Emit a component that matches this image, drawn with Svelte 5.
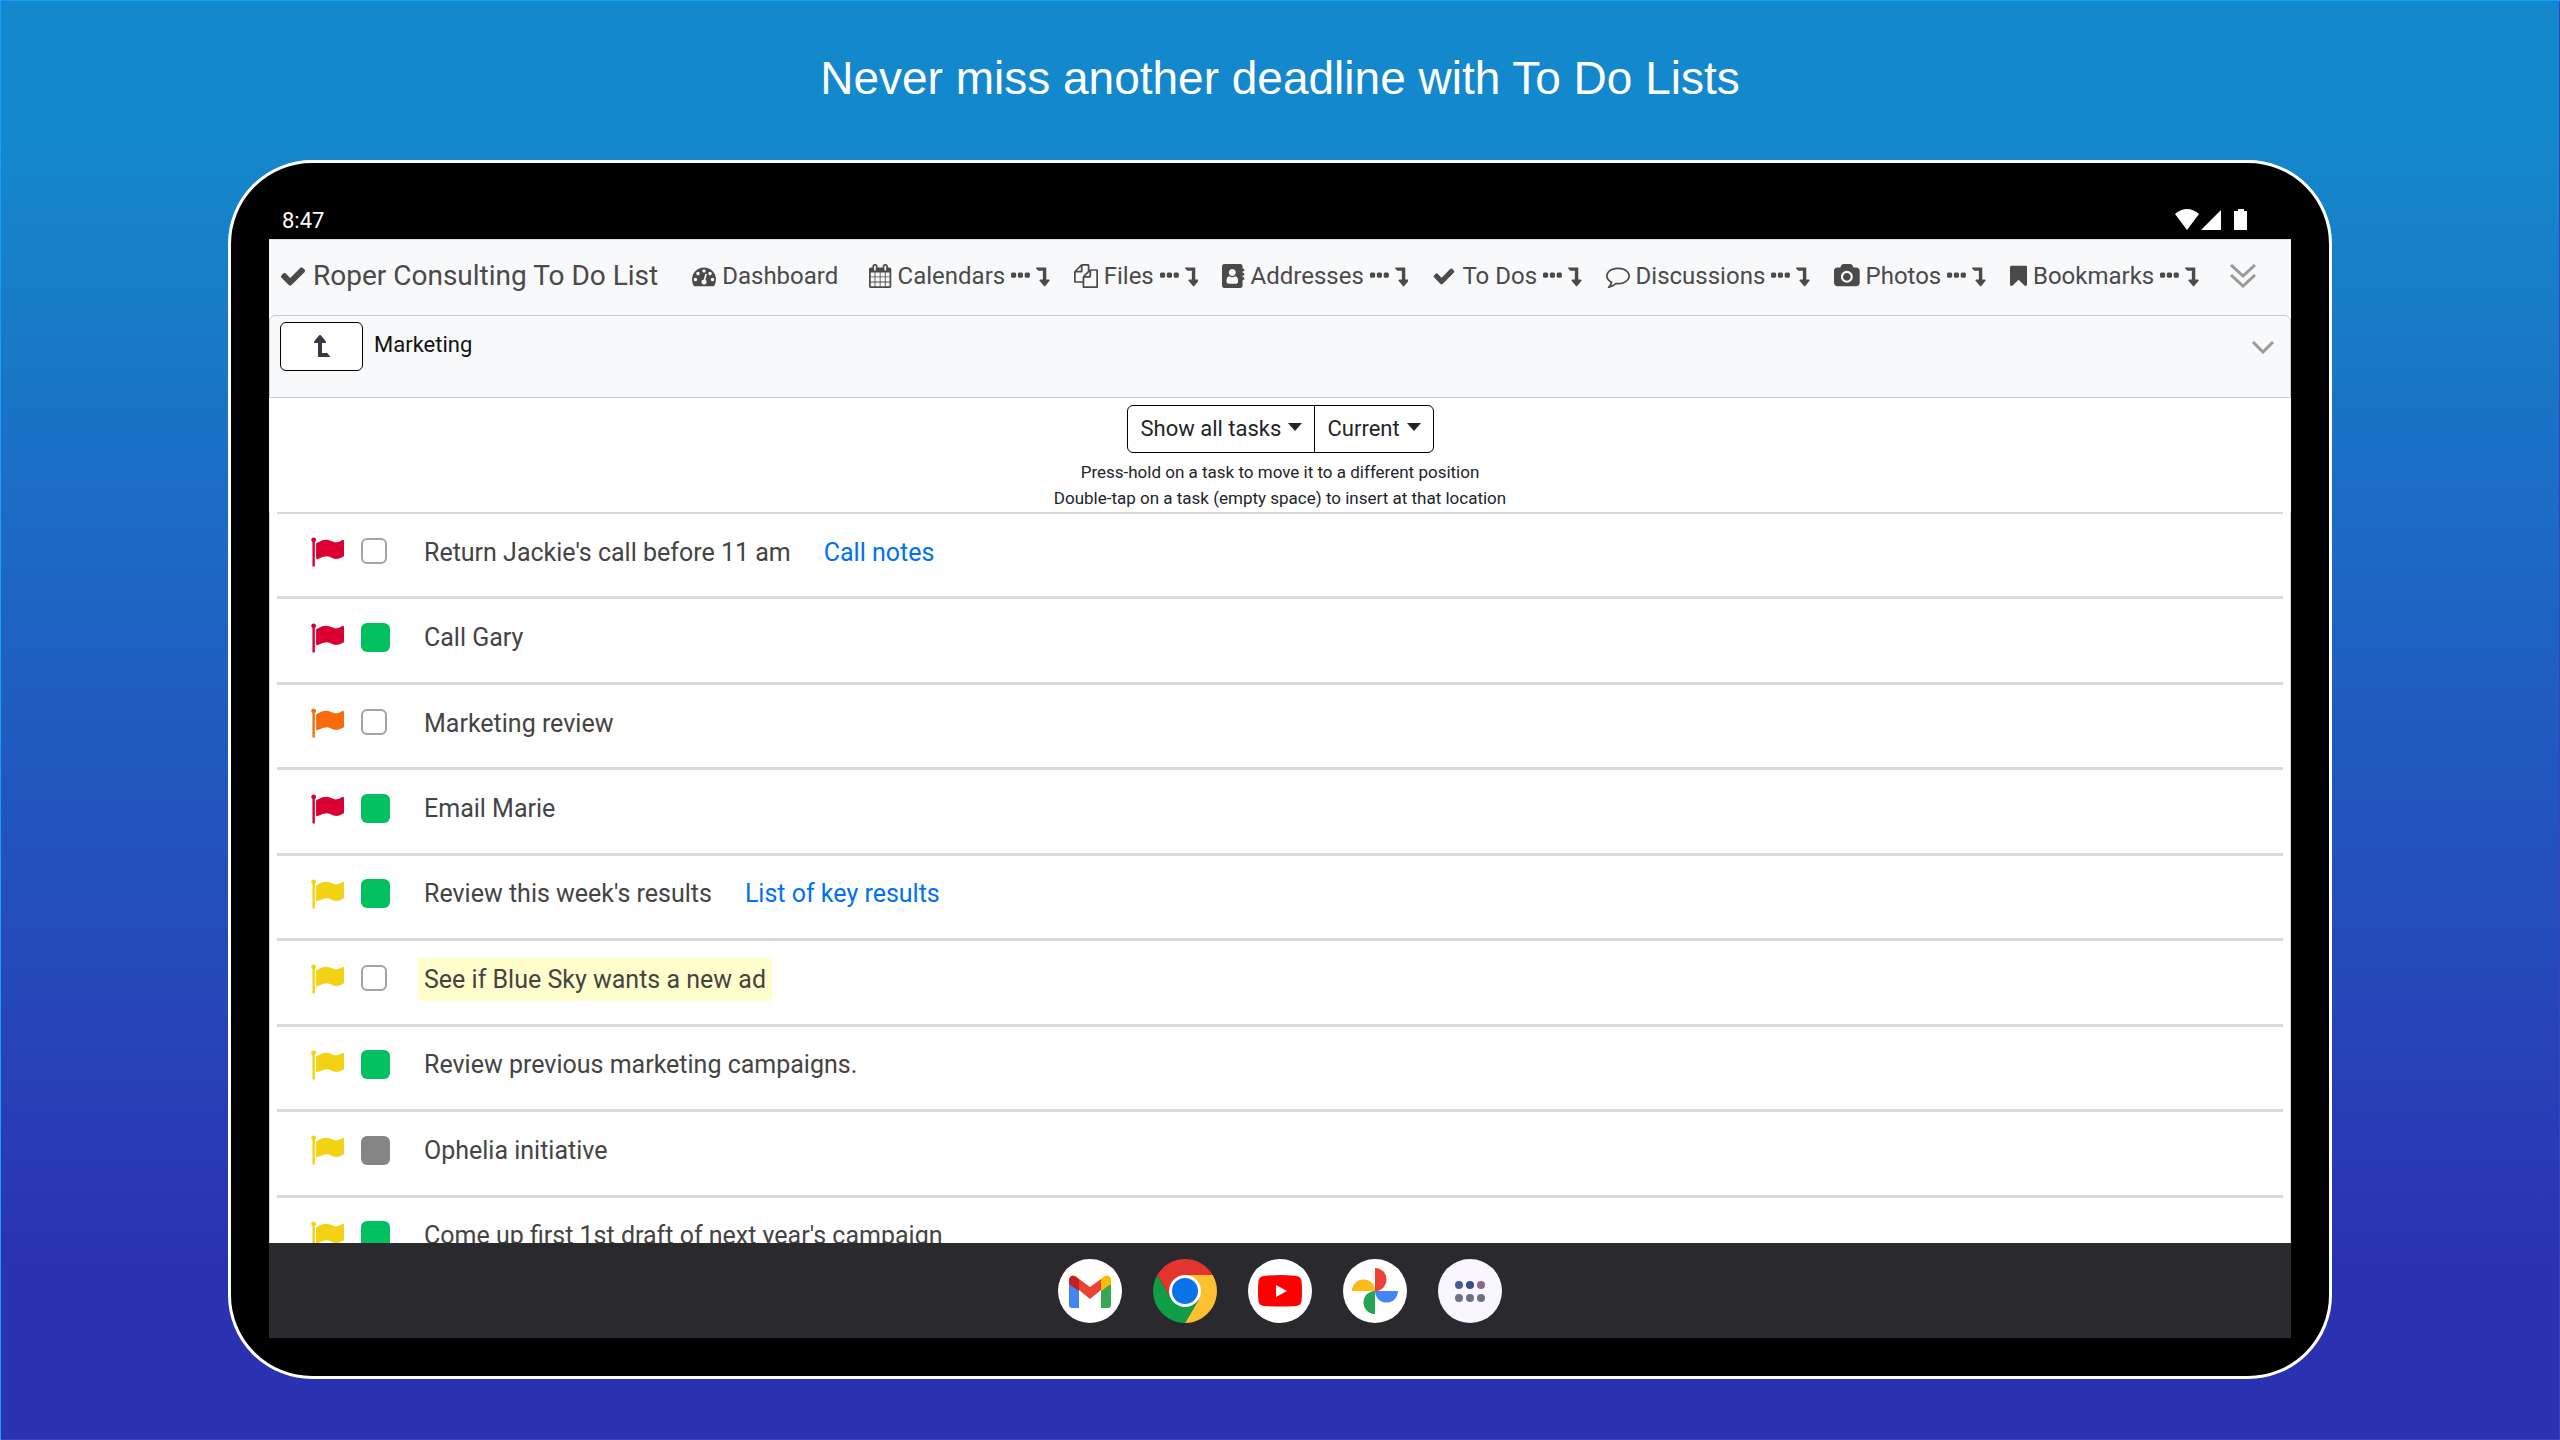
<!--
  App.svelte: promo panel with a tablet showing the shared to-do list.

  The screen is split into status bar, app page (nav, folder bar, filters,
  task rows) and the system dock. The task list is clipped by the dock.
-->
<script lang="ts">
  type Task = {
    text: string;
    flag: 'red' | 'orange' | 'yellow';
    state: 'open' | 'done' | 'parked';
    link?: string;
    highlight?: boolean;
  };

  // ICONS: glyph outlines on a 1792-unit em; w is the advance width.
  const ICONS: Record<string, { w: number; d: string }> = {
    check: { w: 1792, d: 'M1671 566q0 40-28 68l-724 724-136 136q-28 28-68 28t-68-28l-136-136-362-362q-28-28-28-68t28-68l136-136q28-28 68-28t68 28l294 295 656-657q28-28 68-28t68 28l136 136q28 28 28 68z' },
    gauge: { w: 1792, d: 'M384 1152q0-53-37.5-90.5t-90.5-37.5-90.5 37.5-37.5 90.5 37.5 90.5 90.5 37.5 90.5-37.5 37.5-90.5zm192-448q0-53-37.5-90.5t-90.5-37.5-90.5 37.5-37.5 90.5 37.5 90.5 90.5 37.5 90.5-37.5 37.5-90.5zm428 481l101-382q6-26-7.5-48.5t-38.5-29.5-48 6.5-30 39.5l-101 382q-60 5-107 43.5t-63 98.5q-20 77 20 146t117 89 146-20 89-117q16-60-6-117t-72-91zm660-33q0-53-37.5-90.5t-90.5-37.5-90.5 37.5-37.5 90.5 37.5 90.5 90.5 37.5 90.5-37.5 37.5-90.5zm-640-640q0-53-37.5-90.5t-90.5-37.5-90.5 37.5-37.5 90.5 37.5 90.5 90.5 37.5 90.5-37.5 37.5-90.5zm448 192q0-53-37.5-90.5t-90.5-37.5-90.5 37.5-37.5 90.5 37.5 90.5 90.5 37.5 90.5-37.5 37.5-90.5zm320 448q0 261-141 483-19 29-54 29h-1402q-35 0-54-29-141-221-141-483 0-182 71-348t191-286 286-191 348-71 348 71 286 191 191 286 71 348z' },
    calendar: { w: 1664, d: 'M128 1664h288v-288h-288v288zm352 0h320v-288h-320v288zm-352-352h288v-320h-288v320zm352 0h320v-320h-320v320zm-352-384h288v-288h-288v288zm736 736h320v-288h-320v288zm-384-736h320v-288h-320v288zm768 736h288v-288h-288v288zm-384-352h320v-320h-320v320zm-352-864v-288q0-13-9.500-22.500t-22.500-9.500h-64q-13 0-22.500 9.500t-9.500 22.500v288q0 13 9.500 22.500t22.500 9.500h64q13 0 22.500-9.500t9.500-22.500zm736 864h288v-320h-288v320zm-384-384h320v-288h-320v288zm384 0h288v-288h-288v288zm32-480v-288q0-13-9.500-22.500t-22.500-9.500h-64q-13 0-22.500 9.500t-9.500 22.500v288q0 13 9.500 22.500t22.500 9.500h64q13 0 22.500-9.500t9.500-22.500zm384-64v1280q0 52-38 90t-90 38h-1408q-52 0-90-38t-38-90v-1280q0-52 38-90t90-38h128v-96q0-66 47-113t113-47h64q66 0 113 47t47 113v96h384v-96q0-66 47-113t113-47h64q66 0 113 47t47 113v96h128q52 0 90 38t38 90z' },
    files: { w: 1792, d: 'M1696 384q40 0 68 28t28 68v1216q0 40-28 68t-68 28h-960q-40 0-68-28t-28-68v-288h-544q-40 0-68-28t-28-68v-672q0-40 20-88t48-76l408-408q28-28 76-48t88-20h416q40 0 68 28t28 68v328q68-40 128-40h416zm-544 213l-299 299h299v-299zm-640-384l-299 299h299v-299zm196 647l316-316v-416h-384v416q0 40-28 68t-68 28h-416v640h512v-256q0-40 20-88t48-76zm956 804v-1152h-384v416q0 40-28 68t-68 28h-416v640h896z' },
    address: { w: 1664, d: 'M160 0h1216q66 0 113 47t47 113v192h96q32 0 32 32v128q0 32-32 32h-96v128h96q32 0 32 32v128q0 32-32 32h-96v128h96q32 0 32 32v128q0 32-32 32h-96v448q0 66-47 113t-113 47h-1216q-66 0-113-47t-47-113v-1472q0-66 47-113t113-47zM1201 1298q0-57-5.500-107t-21-100.500-39.500-86-64-58-91-22.500q-100 72-212 72t-212-72q-51 0-91 22.500t-64 58-39.500 86-21 100.500-5.500 107q0 73 42 121.500t103 48.500h576q61 0 103-48.500t42-121.500zM1028 640q0-108-76-184t-184-76-184 76-76 184 76 184 184 76 184-76 76-184z' },
    comment: { w: 1792, d: 'M896 384q-204 0-381.500 69.500t-282 187.500-104.500 255q0 112 71.500 213.500t201.500 175.500l87 50-27 96q-24 91-70 172 152-63 275-171l43-38 57 6q69 8 130 8 204 0 381.500-69.500t282-187.500 104.500-255-104.500-255-282-187.500-381.500-69.500zm896 512q0 174-120 321.500t-326 233-450 85.500q-70 0-145-8-198 175-460 242-49 14-114 22h-5q-15 0-27-10.500t-16-27.500v-1q-3-4-.5-12t2-10 4.500-9.500l6-9 7-8.500 8-9q7-8 31-34.500t34.500-38 31-39.500 32.500-51 27-59 26-76q-157-89-247.500-220t-90.500-281q0-174 120-321.500t326-233 450-85.500 450 85.500 326 233 120 321.500z' },
    camera: { w: 1920, d: 'M960 672q119 0 203.500 84.500t84.500 203.500-84.500 203.500-203.500 84.500-203.500-84.500-84.500-203.500 84.500-203.500 203.500-84.500zm704-416q106 0 181 75t75 181v896q0 106-75 181t-181 75h-1408q-106 0-181-75t-75-181v-896q0-106 75-181t181-75h224l51-136q19-49 69.500-84.500t103.500-35.500h512q53 0 103.500 35.500t69.500 84.500l51 136h224zm-704 1152q185 0 316.500-131.500t131.500-316.500-131.500-316.500-316.500-131.500-316.500 131.500-131.500 316.500 131.500 316.500 316.500 131.500z' },
    bookmark: { w: 1280, d: 'M1164 128q23 0 44 9 33 13 52.500 41t19.500 62v1289q0 34-19.500 62t-52.500 41q-19 8-44 8-48 0-83-32l-441-424-441 424q-36 33-83 33-23 0-44-9-33-13-52.500-41t-19.500-62v-1289q0-34 19.500-62t52.500-41q21-9 44-9h1048z' },
    ellipsis: { w: 1408, d: 'M384 736v192q0 40-28 68t-68 28h-192q-40 0-68-28t-28-68v-192q0-40 28-68t68-28h192q40 0 68 28t28 68zm512 0v192q0 40-28 68t-68 28h-192q-40 0-68-28t-28-68v-192q0-40 28-68t68-28h192q40 0 68 28t28 68zm512 0v192q0 40-28 68t-68 28h-192q-40 0-68-28t-28-68v-192q0-40 28-68t68-28h192q40 0 68 28t28 68z' },
    down: { w: 1024, d: 'M32 256h704q13 0 22.500 9.500t9.500 23.500v863h192q40 0 58 37 17 37-9 68l-320 384q-18 22-49 22t-49-22l-320-384q-27-32-9-68 18-37 58-37h192v-640h-320q-14 0-25-11l-160-192q-13-14-4-34 9-19 29-19z' },
    flag: { w: 1792, d: 'M320 256q0 72-64 110v1266q0 13-9.500 22.500t-22.500 9.500h-64q-13 0-22.500-9.500t-9.500-22.500v-1266q-64-38-64-110 0-53 37.500-90.500t90.500-37.500 90.500 37.500 37.500 90.500zm1472 64v763q0 25-12.500 38.500t-39.500 27.500q-215 116-369 116-61 0-123.500-22t-108.500-48-115.500-48-142.500-22q-192 0-464 146-17 9-33 9-26 0-45-19t-19-45v-742q0-32 31-55 21-14 79-43 236-120 421-120 107 0 200 29t219 88q38 19 88 19 54 0 117.500-21t110-47 88-47 54.500-21q26 0 45 19t19 45z' },
  };

  const sections = [
    { icon: 'calendar', label: 'Calendars' },
    { icon: 'files', label: 'Files' },
    { icon: 'address', label: 'Addresses' },
    { icon: 'check', label: 'To Dos' },
    { icon: 'comment', label: 'Discussions' },
    { icon: 'camera', label: 'Photos' },
    { icon: 'bookmark', label: 'Bookmarks' },
  ];

  const tasks: Task[] = [
    { text: "Return Jackie's call before 11 am", flag: 'red', state: 'open', link: 'Call notes' },
    { text: 'Call Gary', flag: 'red', state: 'done' },
    { text: 'Marketing review', flag: 'orange', state: 'open' },
    { text: 'Email Marie', flag: 'red', state: 'done' },
    { text: "Review this week's results", flag: 'yellow', state: 'done', link: 'List of key results' },
    { text: 'See if Blue Sky wants a new ad', flag: 'yellow', state: 'open', highlight: true },
    { text: 'Review previous marketing campaigns.', flag: 'yellow', state: 'done' },
    { text: 'Ophelia initiative', flag: 'yellow', state: 'parked' },
    { text: "Come up first 1st draft of next year's campaign", flag: 'yellow', state: 'done' },
  ];
</script>

{#snippet icon(name: string)}
  <svg class="icon" viewBox="0 0 {ICONS[name].w} 1792" aria-hidden="true"><path fill-rule="evenodd" d={ICONS[name].d} /></svg>
{/snippet}

{#snippet filter(label: string)}
  <label class="filter">
    <select aria-label={label}><option>{label}</option></select>
    <svg viewBox="0 0 14 8" aria-hidden="true"><path d="M0 0h14l-7 8z" /></svg>
  </label>
{/snippet}

<main class="stage">
  <h1>Never miss another deadline with To Do Lists</h1>

  <div class="tablet">
    <div class="status">
      <span>8:47</span>
      <svg viewBox="0 0 72 22" aria-hidden="true">
        <path d="M0 5Q12-5 24 5L12 21zM46 1v20H26zM60 2h3V0h6v2h3v19H59V2z" />
      </svg>
    </div>

    <div class="page">
      <nav>
        <a class="brand" href="#list">{@render icon('check')}Roper Consulting To Do List</a>
        <a class="item home" href="#dashboard">{@render icon('gauge')}Dashboard</a>
        {#each sections as s}
          <a class="item" href="#{s.icon}">
            {@render icon(s.icon)}{s.label}{@render icon('ellipsis')}{@render icon('down')}
          </a>
        {/each}
        <button class="plain more" aria-label="More">
          <svg viewBox="0 0 26 24" aria-hidden="true"><path d="M1 1l12 11L25 1M1 11l12 11 12-11" /></svg>
        </button>
      </nav>

      <div class="folder">
        <button class="up" aria-label="Up one level">{@render icon('down')}</button>
        <span>Marketing</span>
        <button class="plain expand" aria-label="Expand">
          <svg viewBox="0 0 22 13" aria-hidden="true"><path d="M1 1l10 10L21 1" /></svg>
        </button>
      </div>

      <div class="filters">
        <div class="group">
          {@render filter('Show all tasks')}
          {@render filter('Current')}
        </div>
        <p>Press-hold on a task to move it to a different position</p>
        <p>Double-tap on a task (empty space) to insert at that location</p>
      </div>

      <div class="clip">
        <ul>
          {#each tasks as t, i}
            <li>
              <span class="flag {t.flag}">{@render icon('flag')}</span>
              <span class="tick"><input id="task-{i}" type="checkbox" class={t.state} checked={t.state !== 'open'} /></span>
              <label for="task-{i}" class:highlight={t.highlight}>{t.text}</label>
              {#if t.link}<a href="#task-{i}">{t.link}</a>{/if}
            </li>
          {/each}
        </ul>
      </div>
    </div>

    <div class="dock">
      <button class="plain" aria-label="Gmail">
        <svg viewBox="0 0 64 64">
          <circle cx="32" cy="32" r="32" fill="#fff" />
          <path fill="#4285f4" d="M11 23l10 8v18h-7q-3 0-3-3z" />
          <path fill="#34a853" d="M53 23l-10 8v18h7q3 0 3-3z" />
          <path fill="#ea4335" d="M21 20l11 8 11-8v11l-11 9-11-9z" />
          <path fill="#c5221f" d="M11 25v-4q0-4 4-4.500 3 0 6 3.500v12z" />
          <path fill="#fbbc04" d="M53 25v-4q0-4-4-4.500-3 0-6 3.500v12z" />
        </svg>
      </button>
      <button class="plain" aria-label="Chrome">
        <svg viewBox="0 0 64 64">
          <path fill="#e3342f" d="M4.300 16A32 32 0 0 1 59.700 16H32L18 40z" />
          <path fill="#fdc02f" d="M59.700 16A32 32 0 0 1 32 64l14-24L32 16z" />
          <path fill="#0f9d45" d="M4.300 16A32 32 0 0 0 32 64l14-24H18z" />
          <circle cx="32" cy="32" r="16" fill="#fff" />
          <circle cx="32" cy="32" r="13" fill="#0b73e8" />
        </svg>
      </button>
      <button class="plain" aria-label="YouTube">
        <svg viewBox="0 0 64 64">
          <circle cx="32" cy="32" r="32" fill="#fff" />
          <path fill="#f00" d="M16 17q16-2 32 0 5 .5 5.500 5 1 10 0 20-.5 4.500-5.500 5-16 1-32 0-5-.5-5.500-5-1-10 0-20 .5-4.500 5.500-5z" />
          <path fill="#fff" d="M28 26v12l11-6z" />
        </svg>
      </button>
      <button class="plain" aria-label="Photos">
        <svg viewBox="0 0 64 64">
          <circle cx="32" cy="32" r="32" fill="#fff" />
          <path fill="#ea4335" d="M32 9a11.500 11.500 0 0 1 0 23z" />
          <path fill="#4285f4" d="M55 32a11.500 11.500 0 0 1-23 0z" />
          <path fill="#25a653" d="M32 55a11.500 11.500 0 0 1 0-23z" />
          <path fill="#fbb91a" d="M9 32a11.500 11.500 0 0 1 23 0z" />
        </svg>
      </button>
      <button class="plain" aria-label="All apps">
        <svg viewBox="0 0 64 64">
          <circle cx="32" cy="32" r="32" fill="#f9f6fd" />
          <circle cx="21" cy="26" r="4" fill="#475b94" />
          <circle cx="32" cy="26" r="4" fill="#3a4d87" />
          <circle cx="43" cy="26" r="4" fill="#8d668d" />
          <g fill="#6b7086"><circle cx="21" cy="39" r="4" /><circle cx="32" cy="39" r="4" /><circle cx="43" cy="39" r="4" /></g>
        </svg>
      </button>
    </div>
  </div>
</main>

<style>
  :global(body) { margin: 0; }
  .stage { box-sizing: border-box; height: 100vh; display: flex; flex-direction: column; padding: 0 228px 61px; background: linear-gradient(#1488cc 10%, #2b32b2 88%); font-family: Roboto, sans-serif; box-shadow: inset 1px 1px #18a0f8, inset -1px -1px #3a42c4; }
  h1 { margin: 0; height: 160px; text-align: center; font: 400 46px/156px 'Liberation Sans', Arial, sans-serif; color: #fff; }
  p, ul { margin: 0; padding: 0; list-style: none; }
  a { color: inherit; text-decoration: none; }
  .plain { border: 0; padding: 0; background: none; }
  .icon { height: 24px; flex: none; fill: currentColor; }

  .tablet { flex: 1; min-height: 0; box-sizing: border-box; display: flex; flex-direction: column; border: 3px solid #fff; border-radius: 84px; background: #000; padding: 0 38px 38px; }
  .status { height: 76px; box-sizing: border-box; padding: 40px 44px 0 13px; display: flex; justify-content: space-between; align-items: center; color: #fff; font-size: 22px; line-height: 28px; }
  .status svg { width: 72px; height: 22px; margin-bottom: 2px; fill: #fff; }

  .page { flex: 1; min-height: 0; display: flex; flex-direction: column; background: #fff; color: #212529; }
  nav { height: 76px; box-sizing: border-box; border-top: 1px solid #ddd; display: flex; align-items: center; padding: 0 10px 4px; background: #f8f9fb; color: #4a4a4a; font-size: 24px; white-space: nowrap; }
  .brand { display: flex; align-items: center; gap: 6px; margin-right: 34px; font-size: 28px; }
  .brand .icon { height: 28px; }
  .item { display: flex; align-items: center; gap: 6px; margin-right: 24px; }
  .home { margin-right: 31px; }
  .more svg { display: block; width: 26px; height: 24px; margin-left: 7px; }
  .plain path { stroke-width: 3; }
  .more path, .expand path { fill: none; stroke: #999; }

  .folder { height: 83px; box-sizing: border-box; display: flex; align-items: flex-start; padding: 6px 10px; border: 1px solid #c8cacc; border-radius: 6px 6px 0 0; background: #f8f9fb; font-size: 22px; line-height: 46px; color: #111; }
  .up { width: 83px; height: 49px; margin-right: 11px; padding: 0; display: grid; place-items: center; border: 1px solid #000; border-radius: 6px; background: #fff; color: #343a40; }
  .up .icon { height: 28px; transform: rotate(180deg); }
  .expand { margin: 19px 6px 0 auto; }
  .expand svg { display: block; width: 22px; height: 13px; }

  .filters { height: 114px; box-sizing: border-box; padding-top: 7px; text-align: center; font-size: 17px; line-height: 26px; }
  .group { display: inline-flex; height: 48px; box-sizing: border-box; margin-bottom: 6px; border: 1px solid #000; border-radius: 6px; vertical-align: top; }
  .filter { display: grid; align-items: center; }
  .filter + .filter { border-left: 1px solid #000; }
  .filter > * { grid-area: 1 / 1; }
  select { appearance: none; height: 46px; border: 0; padding: 0 32px 2px 13px; background: none; font: 22px Roboto, sans-serif; color: #212529; }
  .filter svg { width: 14px; height: 8px; margin: 0 12px 4px 0; justify-self: end; fill: #212529; pointer-events: none; }

  .clip { flex: 1; min-height: 0; overflow: hidden; padding: 0 7px; border: solid #d4d4d4; border-width: 0 1px; }
  /* Nine even rows; the last one runs under the dock. */
  ul { min-height: 769px; display: grid; grid-auto-rows: 1fr; border-top: 2px solid #d8d8d8; }
  li { display: flex; align-items: center; padding: 0 0 6px 33px; border-bottom: 3px solid #dadada; font-size: 25px; line-height: 31px; color: #444; }
  li a { margin-left: 27px; color: #0070f5; }
  li label { padding: 6px; border-radius: 3px; }
  .highlight { background: #ffffcb; }
  .flag { display: flex; margin-right: 17px; }
  .flag .icon { height: 34px; }
  .red { color: #dc0032; }
  .orange { color: #f86c0d; }
  .yellow { color: #f2d213; }
  .tick { width: 57px; height: 29px; }
  input { appearance: none; display: block; box-sizing: border-box; width: 29px; height: 29px; margin: 0; border-radius: 6px; }
  .open { width: 26px; height: 26px; border: 2px solid #a4a4a4; }
  .done { background: #00c05f; }
  .parked { background: #858585; }

  .dock { height: 95px; display: flex; justify-content: center; align-items: center; gap: 31px; background: #2a292e; }
  .dock svg { display: block; width: 64px; height: 64px; }
</style>
